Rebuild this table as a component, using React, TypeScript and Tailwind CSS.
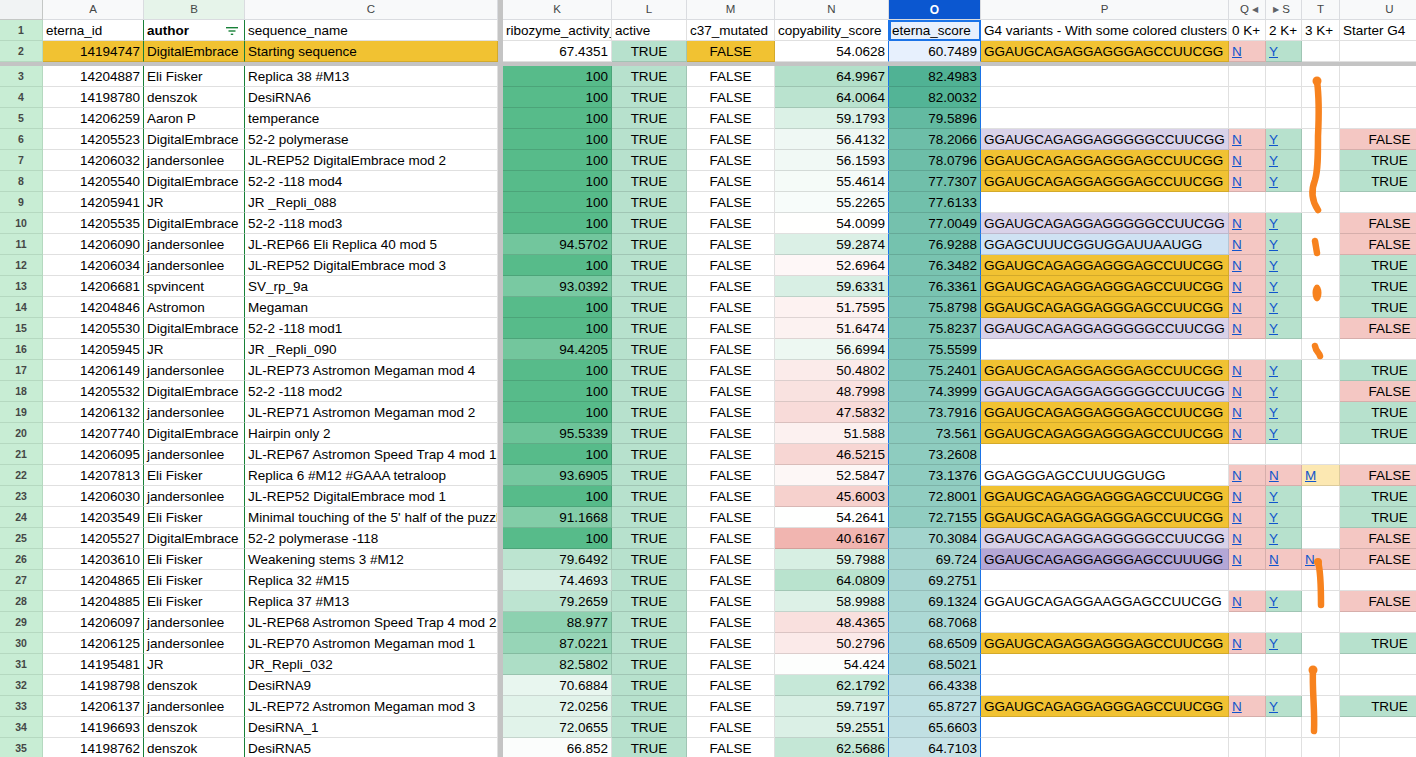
// ============================================
// Eterna sheet - filtered view with color scales
// ============================================
import React from 'react';

type Tone = 'y' | 'l' | 'b' | 'd' | 'w';

interface G4 {
  seq: string;
  tone: Tone;
  s?: 'Y' | 'N';
  t?: string;
  u: boolean;
}

interface Row {
  n: number;
  id: string;
  author: string;
  name: string;
  k: number;
  cs: number;
  es: number;
  g4?: G4;
}

const SEQ_A = 'GGAUGCAGAGGAGGGAGCCUUCGG';
const SEQ_B = 'GGAUGCAGAGGAGGGGGCCUUCGG';

const ya: G4 = { seq: SEQ_A, tone: 'y', u: true };
const lb: G4 = { seq: SEQ_B, tone: 'l', u: false };

const rows: Row[] = [
  { n: 3, id: '14204887', author: 'Eli Fisker', name: 'Replica 38 #M13', k: 100, cs: 64.9967, es: 82.4983 },
  { n: 4, id: '14198780', author: 'denszok', name: 'DesiRNA6', k: 100, cs: 64.0064, es: 82.0032 },
  { n: 5, id: '14206259', author: 'Aaron P', name: 'temperance', k: 100, cs: 59.1793, es: 79.5896 },
  { n: 6, id: '14205523', author: 'DigitalEmbrace', name: '52-2 polymerase', k: 100, cs: 56.4132, es: 78.2066, g4: lb },
  { n: 7, id: '14206032', author: 'jandersonlee', name: 'JL-REP52 DigitalEmbrace mod 2', k: 100, cs: 56.1593, es: 78.0796, g4: ya },
  { n: 8, id: '14205540', author: 'DigitalEmbrace', name: '52-2 -118 mod4', k: 100, cs: 55.4614, es: 77.7307, g4: ya },
  { n: 9, id: '14205941', author: 'JR', name: 'JR _Repli_088', k: 100, cs: 55.2265, es: 77.6133 },
  { n: 10, id: '14205535', author: 'DigitalEmbrace', name: '52-2 -118 mod3', k: 100, cs: 54.0099, es: 77.0049, g4: lb },
  { n: 11, id: '14206090', author: 'jandersonlee', name: 'JL-REP66 Eli Replica 40 mod 5', k: 94.5702, cs: 59.2874, es: 76.9288, g4: { seq: 'GGAGCUUUCGGUGGAUUAAUGG', tone: 'b', u: false } },
  { n: 12, id: '14206034', author: 'jandersonlee', name: 'JL-REP52 DigitalEmbrace mod 3', k: 100, cs: 52.6964, es: 76.3482, g4: ya },
  { n: 13, id: '14206681', author: 'spvincent', name: 'SV_rp_9a', k: 93.0392, cs: 59.6331, es: 76.3361, g4: ya },
  { n: 14, id: '14204846', author: 'Astromon', name: 'Megaman', k: 100, cs: 51.7595, es: 75.8798, g4: ya },
  { n: 15, id: '14205530', author: 'DigitalEmbrace', name: '52-2 -118 mod1', k: 100, cs: 51.6474, es: 75.8237, g4: lb },
  { n: 16, id: '14205945', author: 'JR', name: 'JR _Repli_090', k: 94.4205, cs: 56.6994, es: 75.5599 },
  { n: 17, id: '14206149', author: 'jandersonlee', name: 'JL-REP73 Astromon Megaman mod 4', k: 100, cs: 50.4802, es: 75.2401, g4: ya },
  { n: 18, id: '14205532', author: 'DigitalEmbrace', name: '52-2 -118 mod2', k: 100, cs: 48.7998, es: 74.3999, g4: lb },
  { n: 19, id: '14206132', author: 'jandersonlee', name: 'JL-REP71 Astromon Megaman mod 2', k: 100, cs: 47.5832, es: 73.7916, g4: ya },
  { n: 20, id: '14207740', author: 'DigitalEmbrace', name: 'Hairpin only 2', k: 95.5339, cs: 51.588, es: 73.561, g4: ya },
  { n: 21, id: '14206095', author: 'jandersonlee', name: 'JL-REP67 Astromon Speed Trap 4 mod 1', k: 100, cs: 46.5215, es: 73.2608 },
  { n: 22, id: '14207813', author: 'Eli Fisker', name: 'Replica 6 #M12 #GAAA tetraloop', k: 93.6905, cs: 52.5847, es: 73.1376, g4: { seq: 'GGAGGGAGCCUUUGGUGG', tone: 'w', s: 'N', t: 'M', u: false } },
  { n: 23, id: '14206030', author: 'jandersonlee', name: 'JL-REP52 DigitalEmbrace mod 1', k: 100, cs: 45.6003, es: 72.8001, g4: ya },
  { n: 24, id: '14203549', author: 'Eli Fisker', name: "Minimal touching of the 5' half of the puzzle", k: 91.1668, cs: 54.2641, es: 72.7155, g4: ya },
  { n: 25, id: '14205527', author: 'DigitalEmbrace', name: '52-2 polymerase -118', k: 100, cs: 40.6167, es: 70.3084, g4: lb },
  { n: 26, id: '14203610', author: 'Eli Fisker', name: 'Weakening stems 3 #M12', k: 79.6492, cs: 59.7988, es: 69.724, g4: { seq: 'GGAUGCAGAGGAGGGAGCCUUUGG', tone: 'd', s: 'N', t: 'N', u: false } },
  { n: 27, id: '14204865', author: 'Eli Fisker', name: 'Replica 32 #M15', k: 74.4693, cs: 64.0809, es: 69.2751 },
  { n: 28, id: '14204885', author: 'Eli Fisker', name: 'Replica 37 #M13', k: 79.2659, cs: 58.9988, es: 69.1324, g4: { seq: 'GGAUGCAGAGGAAGGAGCCUUCGG', tone: 'w', u: false } },
  { n: 29, id: '14206097', author: 'jandersonlee', name: 'JL-REP68 Astromon Speed Trap 4 mod 2', k: 88.977, cs: 48.4365, es: 68.7068 },
  { n: 30, id: '14206125', author: 'jandersonlee', name: 'JL-REP70 Astromon Megaman mod 1', k: 87.0221, cs: 50.2796, es: 68.6509, g4: ya },
  { n: 31, id: '14195481', author: 'JR', name: 'JR_Repli_032', k: 82.5802, cs: 54.424, es: 68.5021 },
  { n: 32, id: '14198798', author: 'denszok', name: 'DesiRNA9', k: 70.6884, cs: 62.1792, es: 66.4338 },
  { n: 33, id: '14206137', author: 'jandersonlee', name: 'JL-REP72 Astromon Megaman mod 3', k: 72.0256, cs: 59.7197, es: 65.8727, g4: ya },
  { n: 34, id: '14196693', author: 'denszok', name: 'DesiRNA_1', k: 72.0655, cs: 59.2551, es: 65.6603 },
  { n: 35, id: '14198762', author: 'denszok', name: 'DesiRNA5', k: 66.852, cs: 62.5686, es: 64.7103 },
];

const toneBg: Record<Tone, string> = {
  y: 'bg-[#f1c232]',
  l: 'bg-[#d9d2e9]',
  b: 'bg-[#cfe2f3]',
  d: 'bg-[#b4a7d6]',
  w: 'bg-white',
};

const GREEN: [number, number, number] = [87, 187, 138];
const RED: [number, number, number] = [230, 124, 115];
const SEL: [number, number, number] = [14, 101, 235];

function towards(c: [number, number, number], t: number): [number, number, number] {
  const k = Math.max(0, Math.min(1, t));
  return [255 + (c[0] - 255) * k, 255 + (c[1] - 255) * k, 255 + (c[2] - 255) * k];
}

function rgb(c: [number, number, number]) {
  return `rgb(${Math.round(c[0])}, ${Math.round(c[1])}, ${Math.round(c[2])})`;
}

function selTint(c: [number, number, number]): [number, number, number] {
  return [c[0] * 0.9 + SEL[0] * 0.1, c[1] * 0.9 + SEL[1] * 0.1, c[2] * 0.9 + SEL[2] * 0.1];
}

const kColor = (v: number) => rgb(towards(GREEN, (v - 66) / 34));
const nColor = (v: number) =>
  v < 54.1 ? rgb(towards(RED, (54.1 - v) / 24)) : rgb(towards(GREEN, (v - 54.1) / 24));
const oColor = (v: number) => rgb(selTint(towards(GREEN, (v - 60) / 22.5)));

const FONT = "font-['Liberation_Sans',Arial,sans-serif]";

function Cell({
  className = '',
  style,
  children,
}: {
  className?: string;
  style?: React.CSSProperties;
  children?: React.ReactNode;
}) {
  return (
    <div
      className={`shrink-0 h-full flex items-end pb-[1px] overflow-hidden whitespace-nowrap px-[3px] border-r border-b border-black/[0.12] text-[13.5px] leading-[16px] text-black ${className}`}
      style={style}
    >
      {children}
    </div>
  );
}

function Link({ children }: { children: React.ReactNode }) {
  return <span className="text-[#1155cc] underline">{children}</span>;
}

function RowHead({ n }: { n: number }) {
  return (
    <div className="shrink-0 w-[43px] h-full flex items-center justify-center pt-[1px] bg-[#c8edd4] border-r border-b border-[#b5d9c0] text-[10.5px] font-bold text-[#444746]">
      {n}
    </div>
  );
}

function Divider() {
  return <div className="shrink-0 w-[5px] h-full bg-[#c4c4c4]" />;
}

function ColHead({ className = '', children }: { className?: string; children?: React.ReactNode }) {
  return (
    <div
      className={`shrink-0 h-full flex items-center justify-center pt-[1px] border-r border-b border-[#dadce0] text-[11.5px] text-[#444746] ${className}`}
    >
      {children}
    </div>
  );
}

function FilterIcon() {
  return (
    <svg width="12" height="10" viewBox="0 0 12 10" className="ml-auto mr-[3px] mb-[3px]">
      <rect x="0" y="1" width="12" height="1.4" fill="#188038" />
      <rect x="2.5" y="4.3" width="7" height="1.4" fill="#188038" />
      <rect x="4.8" y="7.6" width="2.4" height="1.4" fill="#188038" />
    </svg>
  );
}

function Scribbles() {
  return (
    <svg
      width="1416"
      height="757"
      viewBox="0 0 1416 757"
      className="absolute top-0 left-0 pointer-events-none"
    >
      <g stroke="#f7821e" strokeWidth="6.5" strokeLinecap="round" strokeLinejoin="round" fill="none">
        <path d="M1317 81 C1319 96 1319 116 1318 136 C1318 156 1318 170 1315 180 C1311 190 1312 201 1318 210" />
        <path d="M1315 241 L1317 253" />
        <path d="M1315 346 C1316 352 1319 352 1320 356" />
        <path d="M1318 562 C1321 572 1321 590 1321 605" />
        <path d="M1313 670 C1312 690 1315 710 1314 731" />
      </g>
      <g fill="#f7821e">
        <circle cx="1317" cy="81" r="4.5" />
        <ellipse cx="1317" cy="293" rx="4.5" ry="8.5" />
        <circle cx="1318" cy="562" r="4" />
        <circle cx="1313" cy="670" r="4.5" />
      </g>
    </svg>
  );
}

export default function App() {
  return (
    <div className={`relative w-[1416px] h-[757px] overflow-hidden bg-white ${FONT}`}>
      {/* column letters */}
      <div className="flex h-[20px]">
        <div className="shrink-0 w-[43px] h-full bg-[#f1f3f4] border-r border-b border-[#c4c7c5]" />
        <ColHead className="w-[101px] bg-[#f8f9fa]">A</ColHead>
        <ColHead className="w-[101px] bg-[#e6f4ea]">B</ColHead>
        <ColHead className="w-[253px] bg-[#f8f9fa]">C</ColHead>
        <Divider />
        <ColHead className="w-[109px] bg-[#f8f9fa]">K</ColHead>
        <ColHead className="w-[75px] bg-[#f8f9fa]">L</ColHead>
        <ColHead className="w-[88px] bg-[#f8f9fa]">M</ColHead>
        <ColHead className="w-[114px] bg-[#f8f9fa]">N</ColHead>
        <ColHead className="w-[92px] bg-[#0b57d0] !text-white font-bold text-[12px]">O</ColHead>
        <ColHead className="w-[248px] bg-[#f8f9fa]">P</ColHead>
        <ColHead className="w-[37px] bg-[#f8f9fa] gap-[3px] pl-[4px]">
          Q<span className="text-[8px] text-[#5f6368]">◀</span>
        </ColHead>
        <ColHead className="w-[36px] bg-[#f8f9fa] gap-[3px] pr-[4px]">
          <span className="text-[8px] text-[#5f6368]">▶</span>S
        </ColHead>
        <ColHead className="w-[38px] bg-[#f8f9fa]">T</ColHead>
        <ColHead className="w-[100px] bg-[#f8f9fa]">U</ColHead>
      </div>

      {/* row 1: field names */}
      <div className="flex h-[21px]">
        <RowHead n={1} />
        <Cell className="w-[101px] border-r-[#188038]">eterna_id</Cell>
        <Cell className="w-[101px] border-r-[#188038] font-bold">
          author
          <FilterIcon />
        </Cell>
        <Cell className="w-[253px]">sequence_name</Cell>
        <Divider />
        <Cell className="w-[109px]">ribozyme_activity_score</Cell>
        <Cell className="w-[75px]">active</Cell>
        <Cell className="w-[88px]">c37_mutated</Cell>
        <Cell className="w-[114px] border-r-[#1a73e8]">copyability_score</Cell>
        <Cell className="w-[92px] bg-[#e7f0fd] border-r-[#1a73e8] outline-2 outline-[#1a73e8] -outline-offset-2">
          eterna_score
        </Cell>
        <Cell className="w-[248px]">G4 variants - With some colored clusters</Cell>
        <Cell className="w-[37px]">0 K+</Cell>
        <Cell className="w-[36px]">2 K+</Cell>
        <Cell className="w-[38px]">3 K+</Cell>
        <Cell className="w-[100px]">Starter G4</Cell>
      </div>

      {/* row 2: starting sequence */}
      <div className="flex h-[21px]">
        <RowHead n={2} />
        <Cell className="w-[101px] justify-end bg-[#f1c232] border-r-[#188038]">14194747</Cell>
        <Cell className="w-[101px] bg-[#f1c232] border-r-[#188038]">DigitalEmbrace</Cell>
        <Cell className="w-[253px] bg-[#f1c232]">Starting sequence</Cell>
        <Divider />
        <Cell className="w-[109px] justify-end">67.4351</Cell>
        <Cell className="w-[75px] justify-center bg-[#b7e1cd]">TRUE</Cell>
        <Cell className="w-[88px] justify-center bg-[#f1c232]">FALSE</Cell>
        <Cell className="w-[114px] justify-end border-r-[#1a73e8]">54.0628</Cell>
        <Cell className="w-[92px] justify-end bg-[#e7f0fd] border-r-[#1a73e8]">60.7489</Cell>
        <Cell className="w-[248px] bg-[#f1c232]">{SEQ_A}</Cell>
        <Cell className="w-[37px] bg-[#f4c7c3]">
          <Link>N</Link>
        </Cell>
        <Cell className="w-[36px] bg-[#b7e1cd]">
          <Link>Y</Link>
        </Cell>
        <Cell className="w-[38px]" />
        <Cell className="w-[100px]" />
      </div>

      {/* frozen rows divider */}
      <div className="h-[4px] bg-[#c4c4c4]" />

      {rows.map((r) => {
        const g = r.g4;
        const s = g?.s ?? 'Y';
        return (
          <div key={r.n} className="flex h-[21px]">
            <RowHead n={r.n} />
            <Cell className="w-[101px] justify-end border-r-[#188038]">{r.id}</Cell>
            <Cell className="w-[101px] border-r-[#188038]">{r.author}</Cell>
            <Cell className="w-[253px]">{r.name}</Cell>
            <Divider />
            <Cell className="w-[109px] justify-end" style={{ backgroundColor: kColor(r.k) }}>
              {r.k}
            </Cell>
            <Cell className="w-[75px] justify-center bg-[#b7e1cd]">TRUE</Cell>
            <Cell className="w-[88px] justify-center">FALSE</Cell>
            <Cell className="w-[114px] justify-end border-r-[#1a73e8]" style={{ backgroundColor: nColor(r.cs) }}>
              {r.cs}
            </Cell>
            <Cell className="w-[92px] justify-end border-r-[#1a73e8]" style={{ backgroundColor: oColor(r.es) }}>
              {r.es}
            </Cell>
            <Cell className={`w-[248px] ${g ? toneBg[g.tone] : ''}`}>{g?.seq}</Cell>
            <Cell className={`w-[37px] ${g ? 'bg-[#f4c7c3]' : ''}`}>{g && <Link>N</Link>}</Cell>
            <Cell className={`w-[36px] ${g ? (s === 'Y' ? 'bg-[#b7e1cd]' : 'bg-[#f4c7c3]') : ''}`}>
              {g && <Link>{s}</Link>}
            </Cell>
            <Cell
              className={`w-[38px] ${g?.t === 'M' ? 'bg-[#fce8b2]' : g?.t === 'N' ? 'bg-[#f4c7c3]' : ''}`}
            >
              {g?.t && <Link>{g.t}</Link>}
            </Cell>
            <Cell className={`w-[100px] justify-center ${g ? (g.u ? 'bg-[#b7e1cd]' : 'bg-[#f4c7c3]') : ''}`}>
              {g ? (g.u ? 'TRUE' : 'FALSE') : ''}
            </Cell>
          </div>
        );
      })}

      <Scribbles />
    </div>
  );
}
